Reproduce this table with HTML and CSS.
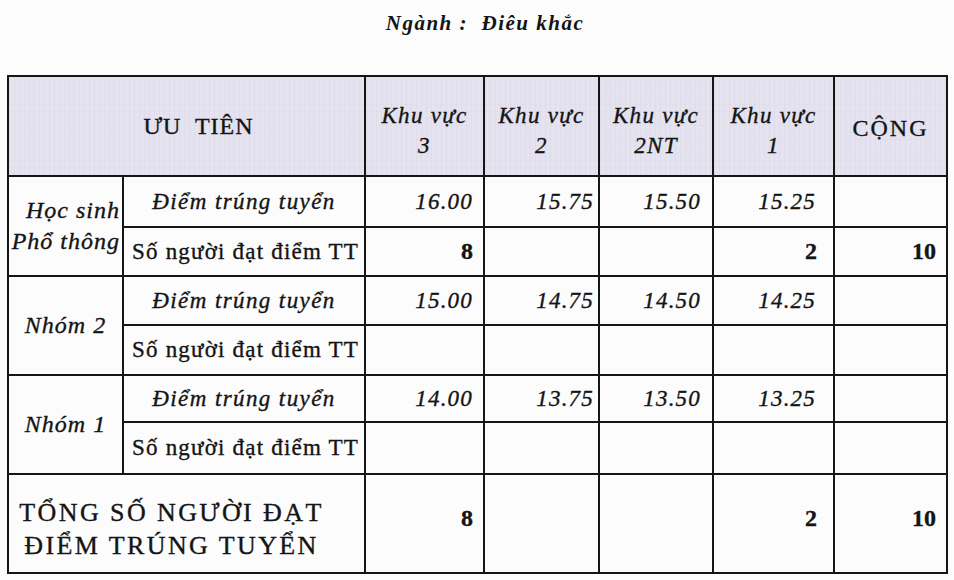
FILE: index.html
```html
<!DOCTYPE html>
<html lang="vi">
<head>
<meta charset="utf-8">
<title>Ngành : Điêu khắc</title>
<link rel="stylesheet" href="styles.css">
</head>
<body>
<div class="page">
  <h1 class="title">Ngành :&nbsp; Điêu khắc</h1>
  <table class="grid">
    <colgroup>
      <col class="w1"><col class="w2"><col class="w3"><col class="w4"><col class="w5"><col class="w6"><col class="w7">
    </colgroup>
    <thead>
      <tr class="r-head">
        <th colspan="2" class="hd h-uu">ƯU TIÊN</th>
        <th class="hd h-kv">Khu vực<br>3</th>
        <th class="hd h-kv">Khu vực<br>2</th>
        <th class="hd h-kv">Khu vực<br>2NT</th>
        <th class="hd h-kv">Khu vực<br>1</th>
        <th class="hd h-cong">CỘNG</th>
      </tr>
    </thead>
    <tbody>
      <tr class="r1">
        <td rowspan="2" class="grp grp-hs">Học sinh<br>Phổ thông</td>
        <td class="lbl-it">Điểm trúng tuyển</td>
        <td class="num c3">16.00</td>
        <td class="num c4">15.75</td>
        <td class="num c5">15.50</td>
        <td class="num c6">15.25</td>
        <td class="num c7"></td>
      </tr>
      <tr class="r2">
        <td class="lbl">Số người đạt điểm TT</td>
        <td class="cnt c3">8</td>
        <td class="cnt c4"></td>
        <td class="cnt c5"></td>
        <td class="cnt c6">2</td>
        <td class="cnt c7">10</td>
      </tr>
      <tr class="r3">
        <td rowspan="2" class="grp">Nhóm 2</td>
        <td class="lbl-it">Điểm trúng tuyển</td>
        <td class="num c3">15.00</td>
        <td class="num c4">14.75</td>
        <td class="num c5">14.50</td>
        <td class="num c6">14.25</td>
        <td class="num c7"></td>
      </tr>
      <tr class="r4">
        <td class="lbl">Số người đạt điểm TT</td>
        <td class="cnt c3"></td>
        <td class="cnt c4"></td>
        <td class="cnt c5"></td>
        <td class="cnt c6"></td>
        <td class="cnt c7"></td>
      </tr>
      <tr class="r5">
        <td rowspan="2" class="grp">Nhóm 1</td>
        <td class="lbl-it">Điểm trúng tuyển</td>
        <td class="num c3">14.00</td>
        <td class="num c4">13.75</td>
        <td class="num c5">13.50</td>
        <td class="num c6">13.25</td>
        <td class="num c7"></td>
      </tr>
      <tr class="r6">
        <td class="lbl">Số người đạt điểm TT</td>
        <td class="cnt c3"></td>
        <td class="cnt c4"></td>
        <td class="cnt c5"></td>
        <td class="cnt c6"></td>
        <td class="cnt c7"></td>
      </tr>
      <tr class="r-total">
        <td colspan="2" class="total">TỔNG SỐ NGƯỜI ĐẠT<br>ĐIỂM TRÚNG TUYỂN</td>
        <td class="cnt c3 tot">8</td>
        <td class="cnt c4 tot"></td>
        <td class="cnt c5 tot"></td>
        <td class="cnt c6 tot">2</td>
        <td class="cnt c7 tot">10</td>
      </tr>
    </tbody>
  </table>
</div>
</body>
</html>
```

FILE: styles.css
```css
html, body {
  margin: 0;
  background: #fcfcfc;
}

body {
  color: #141414;
  font-family: "Liberation Serif", "Times New Roman", serif;
  -webkit-text-stroke: 0.35px #141414;
}

.page {
  padding-top: 11px;
}

.title {
  margin: 0;
  padding-left: 16px;
  text-align: center;
  font-size: 21px;
  line-height: 24px;
  font-weight: bold;
  font-style: italic;
  letter-spacing: 1.5px;
  -webkit-text-stroke: 0;
}

.grid {
  margin: 40px 0 0 7px;
  border-collapse: collapse;
  table-layout: fixed;
  width: 939px;
}

.w1 { width: 115px; }
.w2 { width: 242px; }
.w3 { width: 119px; }
.w4 { width: 115px; }
.w5 { width: 114px; }
.w6 { width: 121px; }
.w7 { width: 113px; }

th,
td {
  border: 2px solid #161616;
  padding: 0;
  vertical-align: middle;
}

/* header */
.hd {
  background-color: #e5e3ef;
  background-image: repeating-linear-gradient(90deg, rgba(150, 146, 180, 0.07) 0 1px, transparent 1px 5px),
                    repeating-linear-gradient(0deg, rgba(150, 146, 180, 0.04) 0 1px, transparent 1px 7px);
  font-weight: normal;
  text-align: center;
}

.r-head { height: 100px; }

.h-uu {
  font-size: 24px;
  letter-spacing: 1px;
  word-spacing: 7px;
  padding-left: 24px;
}

.h-kv {
  font-style: italic;
  font-size: 23px;
  line-height: 30px;
  letter-spacing: 1.3px;
  padding-top: 9px;
}

.h-cong {
  font-size: 24px;
  letter-spacing: 2px;
  padding-top: 4px;
}

/* body rows */
.r1 { height: 51px; }
.r2 { height: 49px; }
.r3 { height: 49px; }
.r4 { height: 50px; }
.r5 { height: 47px; }
.r6 { height: 52px; }
.r-total { height: 99px; }

.grp {
  font-style: italic;
  font-size: 24px;
  line-height: 31px;
  letter-spacing: 1px;
  text-align: center;
}

.grp-hs {
  text-align: right;
  padding-right: 2px;
  white-space: nowrap;
}

.lbl-it {
  font-style: italic;
  font-size: 23px;
  letter-spacing: 1.4px;
  text-align: center;
}

.lbl {
  font-size: 23px;
  letter-spacing: 1.2px;
  white-space: nowrap;
  padding-left: 8px;
}

.num {
  font-style: italic;
  font-size: 23px;
  letter-spacing: 1.2px;
  text-align: right;
}

.cnt {
  font-weight: bold;
  font-size: 24px;
  text-align: right;
}

.num.c3 { padding-right: 10px; }
.num.c4 { padding-right: 4px; }
.num.c5 { padding-right: 11px; }
.num.c6 { padding-right: 17px; }
.cnt.c3 { padding-right: 10px; }
.cnt.c6 { padding-right: 16px; }
.cnt.c7 { padding-right: 10px; }

.cnt.tot {
  padding-bottom: 10px;
}

.total {
  font-size: 26px;
  line-height: 33px;
  letter-spacing: 2.4px;
  text-align: center;
  padding-right: 30px;
  padding-top: 10px;
}
```
